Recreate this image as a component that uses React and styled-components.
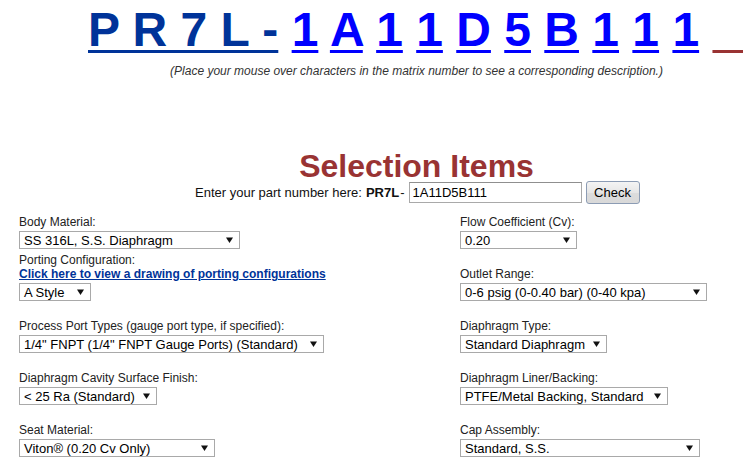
import React from 'react';
import styled, { createGlobalStyle } from 'styled-components';

const GlobalStyle = createGlobalStyle`
  html, body {
    margin: 0;
    padding: 0;
    background: #fff;
    overflow: hidden;
  }
  body {
    font-family: 'Liberation Sans', Arial, sans-serif;
    color: #000;
  }
`;

const Page = styled.div`
  width: 743px;
  height: 468px;
  overflow: hidden;
`;

const Top = styled.div`
  width: 833px;
`;

const Matrix = styled.div`
  white-space: nowrap;
  padding-left: 88px;
  padding-top: 2px;
  font-size: 48px;
  font-weight: bold;
  line-height: 55px;
`;

const MatrixChar = styled.a`
  color: ${(p) => p.$color || '#0000ff'};
  text-decoration: underline;
  text-decoration-thickness: 3px;
  text-underline-offset: 4px;
  cursor: pointer;
`;

const Hint = styled.div`
  text-align: center;
  font-size: 12px;
  font-style: italic;
  color: #333;
  margin-top: 7px;
`;

const Heading = styled.h1`
  margin: 76px 0 0;
  width: 833px;
  text-align: center;
  color: #993333;
  font-size: 32px;
  line-height: 24px;
  font-weight: bold;
`;

const PartRow = styled.div`
  display: flex;
  align-items: center;
  padding-left: 195px;
  margin-top: 3px;
  height: 23px;
  font-size: 13px;
  color: #111;
`;

const Prefix = styled.b`
  margin-left: 4px;
  margin-right: 1px;
  font-weight: bold;
`;

const PartInput = styled.input`
  box-sizing: border-box;
  width: 173px;
  height: 21px;
  margin: 0 0 0 4px;
  padding: 0 3px;
  border: 1px solid #a9a9a9;
  border-top-color: #8f8f8f;
  font-family: 'Liberation Sans', Arial, sans-serif;
  font-size: 13px;
  color: #000;
  outline: none;
`;

const CheckButton = styled.button`
  box-sizing: border-box;
  width: 54px;
  height: 23px;
  margin-left: 4px;
  padding: 0;
  border: 1px solid #8c9cb4;
  border-radius: 3px;
  background: linear-gradient(#f4f4f4, #e6e6e6 50%, #dcdcdc 51%, #d9d9d9);
  font-family: 'Liberation Sans', Arial, sans-serif;
  font-size: 13px;
  color: #000;
`;

const Grid = styled.div`
  display: grid;
  grid-template-columns: 441px 1fr;
  grid-template-rows: 45px repeat(4, 52px);
  align-items: end;
  padding-left: 19px;
`;

const Field = styled.div`
  display: flex;
  flex-direction: column;
  align-items: flex-start;
`;

const Label = styled.div`
  font-size: 12px;
  line-height: 14px;
  color: #222;
`;

const DrawingLink = styled.a`
  font-size: 12px;
  line-height: 14px;
  font-weight: bold;
  color: #003399;
  text-decoration: underline;
`;

const Dropdown = styled.div`
  box-sizing: border-box;
  display: flex;
  align-items: center;
  width: ${(p) => p.$width}px;
  height: 18px;
  margin-top: 2px;
  padding: 0 6px 0 4px;
  border: 1px solid #a9a9a9;
  background: #fff;
  font-size: 13px;
  color: #000;
  white-space: nowrap;
`;

const Arrow = styled.svg`
  margin-left: auto;
  flex: none;
`;

function Select({ width, value }) {
  return (
    <Dropdown $width={width}>
      <span>{value}</span>
      <Arrow width="7" height="6" viewBox="0 0 7 6">
        <path d="M0 0.5 H7 L3.5 6 Z" fill="#111" />
      </Arrow>
    </Dropdown>
  );
}

const chars = ['1', 'A', '1', '1', 'D', '5', 'B', '1', '1', '1'];

const fields = [
  { label: 'Body Material:', value: 'SS 316L, S.S. Diaphragm', width: 221 },
  { label: 'Flow Coefficient (Cv):', value: '0.20', width: 117 },
  { label: 'Porting Configuration:', link: 'Click here to view a drawing of porting configurations', value: 'A Style', width: 72 },
  { label: 'Outlet Range:', value: '0-6 psig (0-0.40 bar) (0-40 kpa)', width: 247 },
  { label: 'Process Port Types (gauge port type, if specified):', value: '1/4" FNPT (1/4" FNPT Gauge Ports) (Standard)', width: 305 },
  { label: 'Diaphragm Type:', value: 'Standard Diaphragm', width: 147 },
  { label: 'Diaphragm Cavity Surface Finish:', value: '< 25 Ra (Standard)', width: 138 },
  { label: 'Diaphragm Liner/Backing:', value: 'PTFE/Metal Backing, Standard', width: 208 },
  { label: 'Seat Material:', value: 'Viton® (0.20 Cv Only)', width: 196 },
  { label: 'Cap Assembly:', value: 'Standard, S.S.', width: 240 },
];

export default function App() {
  return (
    <Page>
      <GlobalStyle />
      <Top>
        <Matrix>
          <MatrixChar $color="#003399">P R 7 L -</MatrixChar>
          {chars.map((c, i) => (
            <React.Fragment key={i}>
              {' '}
              <MatrixChar>{c}</MatrixChar>
            </React.Fragment>
          ))}
          {' '}
          <MatrixChar $color="#993333">{'\u00a0\u00a0\u00a0\u00a0'}</MatrixChar>
        </Matrix>
        <Hint>(Place your mouse over characters in the matrix number to see a corresponding description.)</Hint>
      </Top>

      <Heading>Selection Items</Heading>
      <PartRow>
        Enter your part number here:
        <Prefix>PR7L</Prefix>-
        <PartInput defaultValue="1A11D5B111" />
        <CheckButton>Check</CheckButton>
      </PartRow>

      <Grid>
        {fields.map((f) => (
          <Field key={f.label}>
            <Label>{f.label}</Label>
            {f.link && <DrawingLink href="#">{f.link}</DrawingLink>}
            <Select width={f.width} value={f.value} />
          </Field>
        ))}
      </Grid>
    </Page>
  );
}
